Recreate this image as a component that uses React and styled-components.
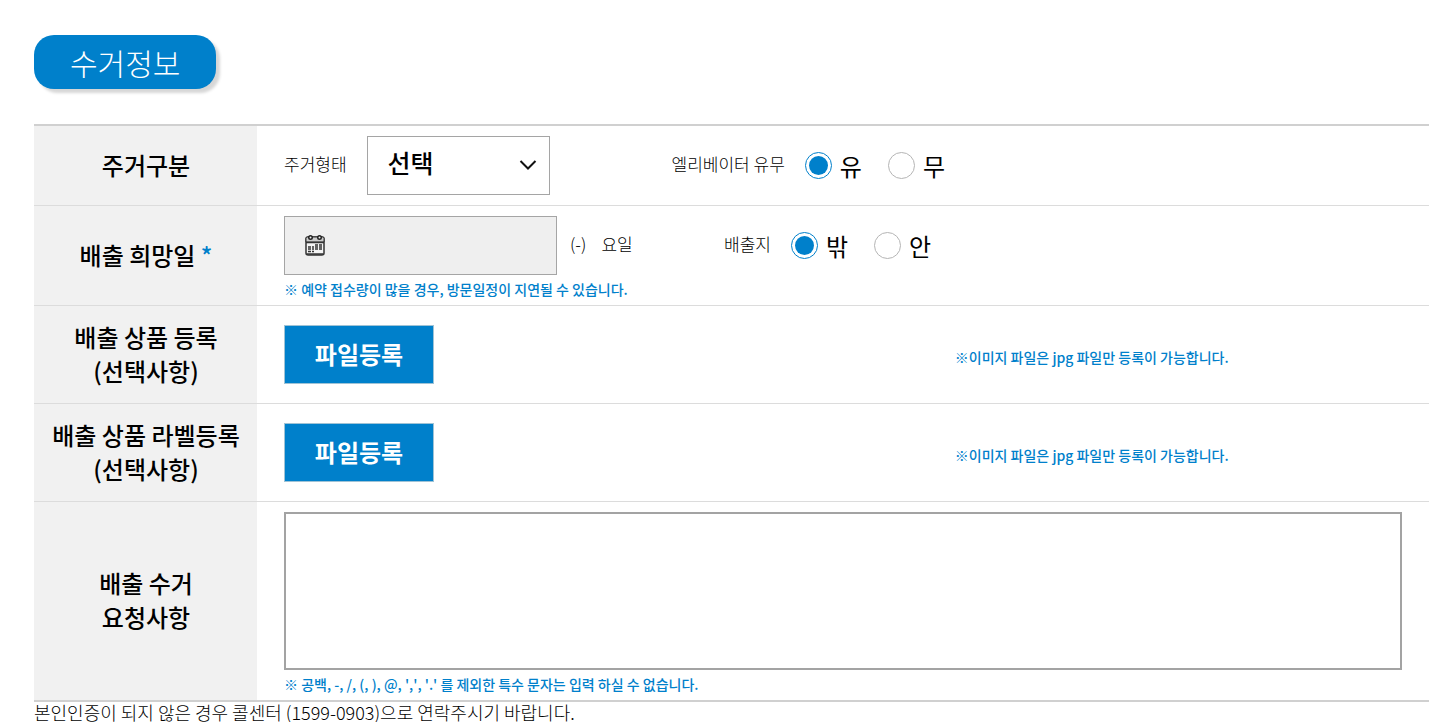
import React, { useState } from 'react'
import styled, { createGlobalStyle } from 'styled-components'

const GlobalStyle = createGlobalStyle`
  * {
    box-sizing: border-box;
  }
  body {
    margin: 0;
    background-color: #fff;
    color: #000;
    font-family: 'Noto Sans CJK KR', sans-serif;
    overflow-x: hidden;
  }
`

const Section = styled.section`
  padding: 35px 12px 0 34px;
`
const Title = styled.h2`
  width: fit-content;
  margin: 0 0 35px;
  padding: 0 36px;
  border-radius: 20px;
  background-color: #0080cb;
  box-shadow: 4px 4px 3px rgba(0, 0, 0, 0.16);
  color: #fff;
  font-size: 30px;
  font-weight: 300;
  line-height: 54px;
`
const Table = styled.table`
  width: 100%;
  border-collapse: separate;
  border-spacing: 0;
  border-top: 2px solid #d0d0d0;
  border-bottom: 2px solid #d0d0d0;
`
const Row = styled.tr`
  & + & > * {
    border-top: 1px solid #dcdcdc;
  }
`
const Head = styled.th`
  width: 223px;
  padding: 0 0 2px 1px;
  background-color: #f1f1f1;
  font-size: 24px;
  font-weight: 500;
  line-height: 34px;
  text-align: center;
`
const Required = styled.span`
  color: #0080cb;
`
const Cell = styled.td`
  padding: ${(props) => props.$pad || '10px 27px'};
`
const Line = styled.div`
  display: flex;
  align-items: center;
`
const Label = styled.label`
  padding-bottom: 4px;
  font-size: 17px;
  font-weight: 300;
  line-height: 24px;
`
const SelectWrap = styled.div`
  display: grid;
  align-items: center;
  width: 183px;
  margin: 0 122px 0 20px;

  > * {
    grid-area: 1 / 1;
  }
  svg {
    justify-self: end;
    margin-right: 12px;
    pointer-events: none;
  }
`
const Select = styled.select`
  width: 100%;
  height: 59px;
  padding: 0 20px 8px;
  border: 1px solid #a5a5a5;
  border-radius: 0;
  background-color: #fff;
  color: #000;
  appearance: none;
  font-family: inherit;
  font-size: 25px;
  font-weight: 500;
`
const DateBox = styled.div`
  display: flex;
  align-items: center;
  width: 273px;
  height: 59px;
  margin-right: 13px;
  padding-left: 20px;
  border: 1px solid #a5a5a5;
  background-color: #efefef;
`
const DateInput = styled.input`
  flex: 1;
  min-width: 0;
  height: 100%;
  padding: 0 12px;
  border: none;
  background: none;
  font-family: inherit;
  font-size: 24px;
`
const Weekday = styled.div`
  display: flex;
  gap: 15px;
  width: 154px;
  padding-bottom: 4px;
  font-size: 17px;
  font-weight: 300;
  line-height: 24px;
`
const Radios = styled.div`
  display: flex;
  gap: 26px;
  margin-left: 20px;
`
const RadioLabel = styled.label`
  display: flex;
  align-items: center;
  gap: 8px;
  font-size: 24px;
  line-height: 34px;
`
const Radio = styled.input`
  width: 27px;
  height: 27px;
  margin: 0;
  padding: 3px;
  border: 1px solid #b5b5b5;
  border-radius: 50%;
  background-color: #fff;
  background-clip: content-box;
  appearance: none;

  &:checked {
    border-color: #0080cb;
    background-color: #0080cb;
  }
`
const Note = styled.p`
  margin: 0;
  padding-top: 4px;
  color: #0080cb;
  font-size: 14px;
  font-weight: 500;
  line-height: 20px;
  font-kerning: none;
`
const FileSlot = styled.div`
  flex: 0 0 60%;
`
const FileButton = styled.button`
  width: 150px;
  height: 59px;
  padding: 0 0 2px;
  border: 1px solid #9fc3d6;
  background-color: #0080cb;
  color: #fff;
  font-family: inherit;
  font-size: 24px;
  font-weight: 700;
`
const TextArea = styled.textarea`
  display: block;
  width: 100%;
  height: 158px;
  padding: 12px;
  border: 2px solid #a3a3a3;
  border-radius: 0;
  resize: none;
  font-family: inherit;
  font-size: 24px;
`
const Footnote = styled.p`
  margin: 0;
  font-size: 18px;
  font-weight: 300;
  line-height: 20px;
`

const ChevronIcon = () => (
  <svg width="20" height="20" viewBox="0 0 20 20" fill="none" aria-hidden="true">
    <path d="M2.500 5 10 12.500l7.500-7.500" stroke="#111" strokeWidth="2" />
  </svg>
)

const CalendarIcon = () => (
  <svg width="20" height="22" viewBox="0 0 20 22" fill="none" aria-hidden="true">
    <rect x="1" y="2" width="18" height="18" rx="2" fill="#f4f4f4" stroke="#333" strokeWidth="1.500" />
    <path d="M1 3.500A1.500 1.500 0 0 1 2.500 2h15A1.500 1.500 0 0 1 19 3.500V7H1z" fill="#ccc" stroke="#333" />
    <path d="M1 7.500h18M2 19h16" stroke="#333" strokeWidth="1.500" />
    <circle cx="5.500" cy="2.500" r="1.750" fill="#efefef" stroke="#222" strokeWidth="1.500" />
    <circle cx="14.500" cy="2.500" r="1.750" fill="#efefef" stroke="#222" strokeWidth="1.500" />
    <path
      d="M10 10h3m1 0h3M3 12h3m1 0h2m1 0h3m1 0h3M3 14h3m1 0h2m1 0h3m1 0h3M3 16.500h3m1 0h2"
      stroke="#333"
      strokeWidth="1.500"
    />
  </svg>
)

const RadioGroup = ({ name, label, options }) => {
  const [value, setValue] = useState(options[0])
  return (
    <Radios role="radiogroup" aria-label={label}>
      {options.map((option) => (
        <RadioLabel key={option}>
          <Radio
            type="radio"
            name={name}
            value={option}
            checked={value === option}
            onChange={() => setValue(option)}
          />
          {option}
        </RadioLabel>
      ))}
    </Radios>
  )
}

const FileRow = ({ title }) => (
  <Row>
    <Head scope="row">
      {title}
      <br />
      (선택사항)
    </Head>
    <Cell $pad="19px 27px">
      <Line>
        <FileSlot>
          <FileButton type="button">파일등록</FileButton>
        </FileSlot>
        <Note>※이미지 파일은 jpg 파일만 등록이 가능합니다.</Note>
      </Line>
    </Cell>
  </Row>
)

const App = () => {
  return (
    <>
      <GlobalStyle />
      <Section>
        <Title>수거정보</Title>
        <Table>
          <tbody>
            <Row>
              <Head scope="row">주거구분</Head>
              <Cell>
                <Line>
                  <Label htmlFor="house">주거형태</Label>
                  <SelectWrap>
                    <Select id="house">
                      <option>선택</option>
                    </Select>
                    <ChevronIcon />
                  </SelectWrap>
                  <Label as="span">엘리베이터 유무</Label>
                  <RadioGroup name="elevator" label="엘리베이터 유무" options={['유', '무']} />
                </Line>
              </Cell>
            </Row>
            <Row>
              <Head scope="row">
                <label htmlFor="date">배출 희망일</label> <Required>*</Required>
              </Head>
              <Cell $pad="10px 27px 6px">
                <Line>
                  <DateBox>
                    <CalendarIcon />
                    <DateInput id="date" type="text" readOnly />
                  </DateBox>
                  <Weekday>
                    <span>(-)</span>
                    <span>요일</span>
                  </Weekday>
                  <Label as="span">배출지</Label>
                  <RadioGroup name="place" label="배출지" options={['밖', '안']} />
                </Line>
                <Note>※ 예약 접수량이 많을 경우, 방문일정이 지연될 수 있습니다.</Note>
              </Cell>
            </Row>
            <FileRow title="배출 상품 등록" />
            <FileRow title="배출 상품 라벨등록" />
            <Row>
              <Head scope="row">
                <label htmlFor="request">
                  배출 수거
                  <br />
                  요청사항
                </label>
              </Head>
              <Cell $pad="10px 27px 6px">
                <TextArea id="request" />
                <Note>※ 공백, -, /, (, ), @, ',', '.' 를 제외한 특수 문자는 입력 하실 수 없습니다.</Note>
              </Cell>
            </Row>
          </tbody>
        </Table>
        <Footnote>본인인증이 되지 않은 경우 콜센터 (1599-0903)으로 연락주시기 바랍니다.</Footnote>
      </Section>
    </>
  )
}

export default App
